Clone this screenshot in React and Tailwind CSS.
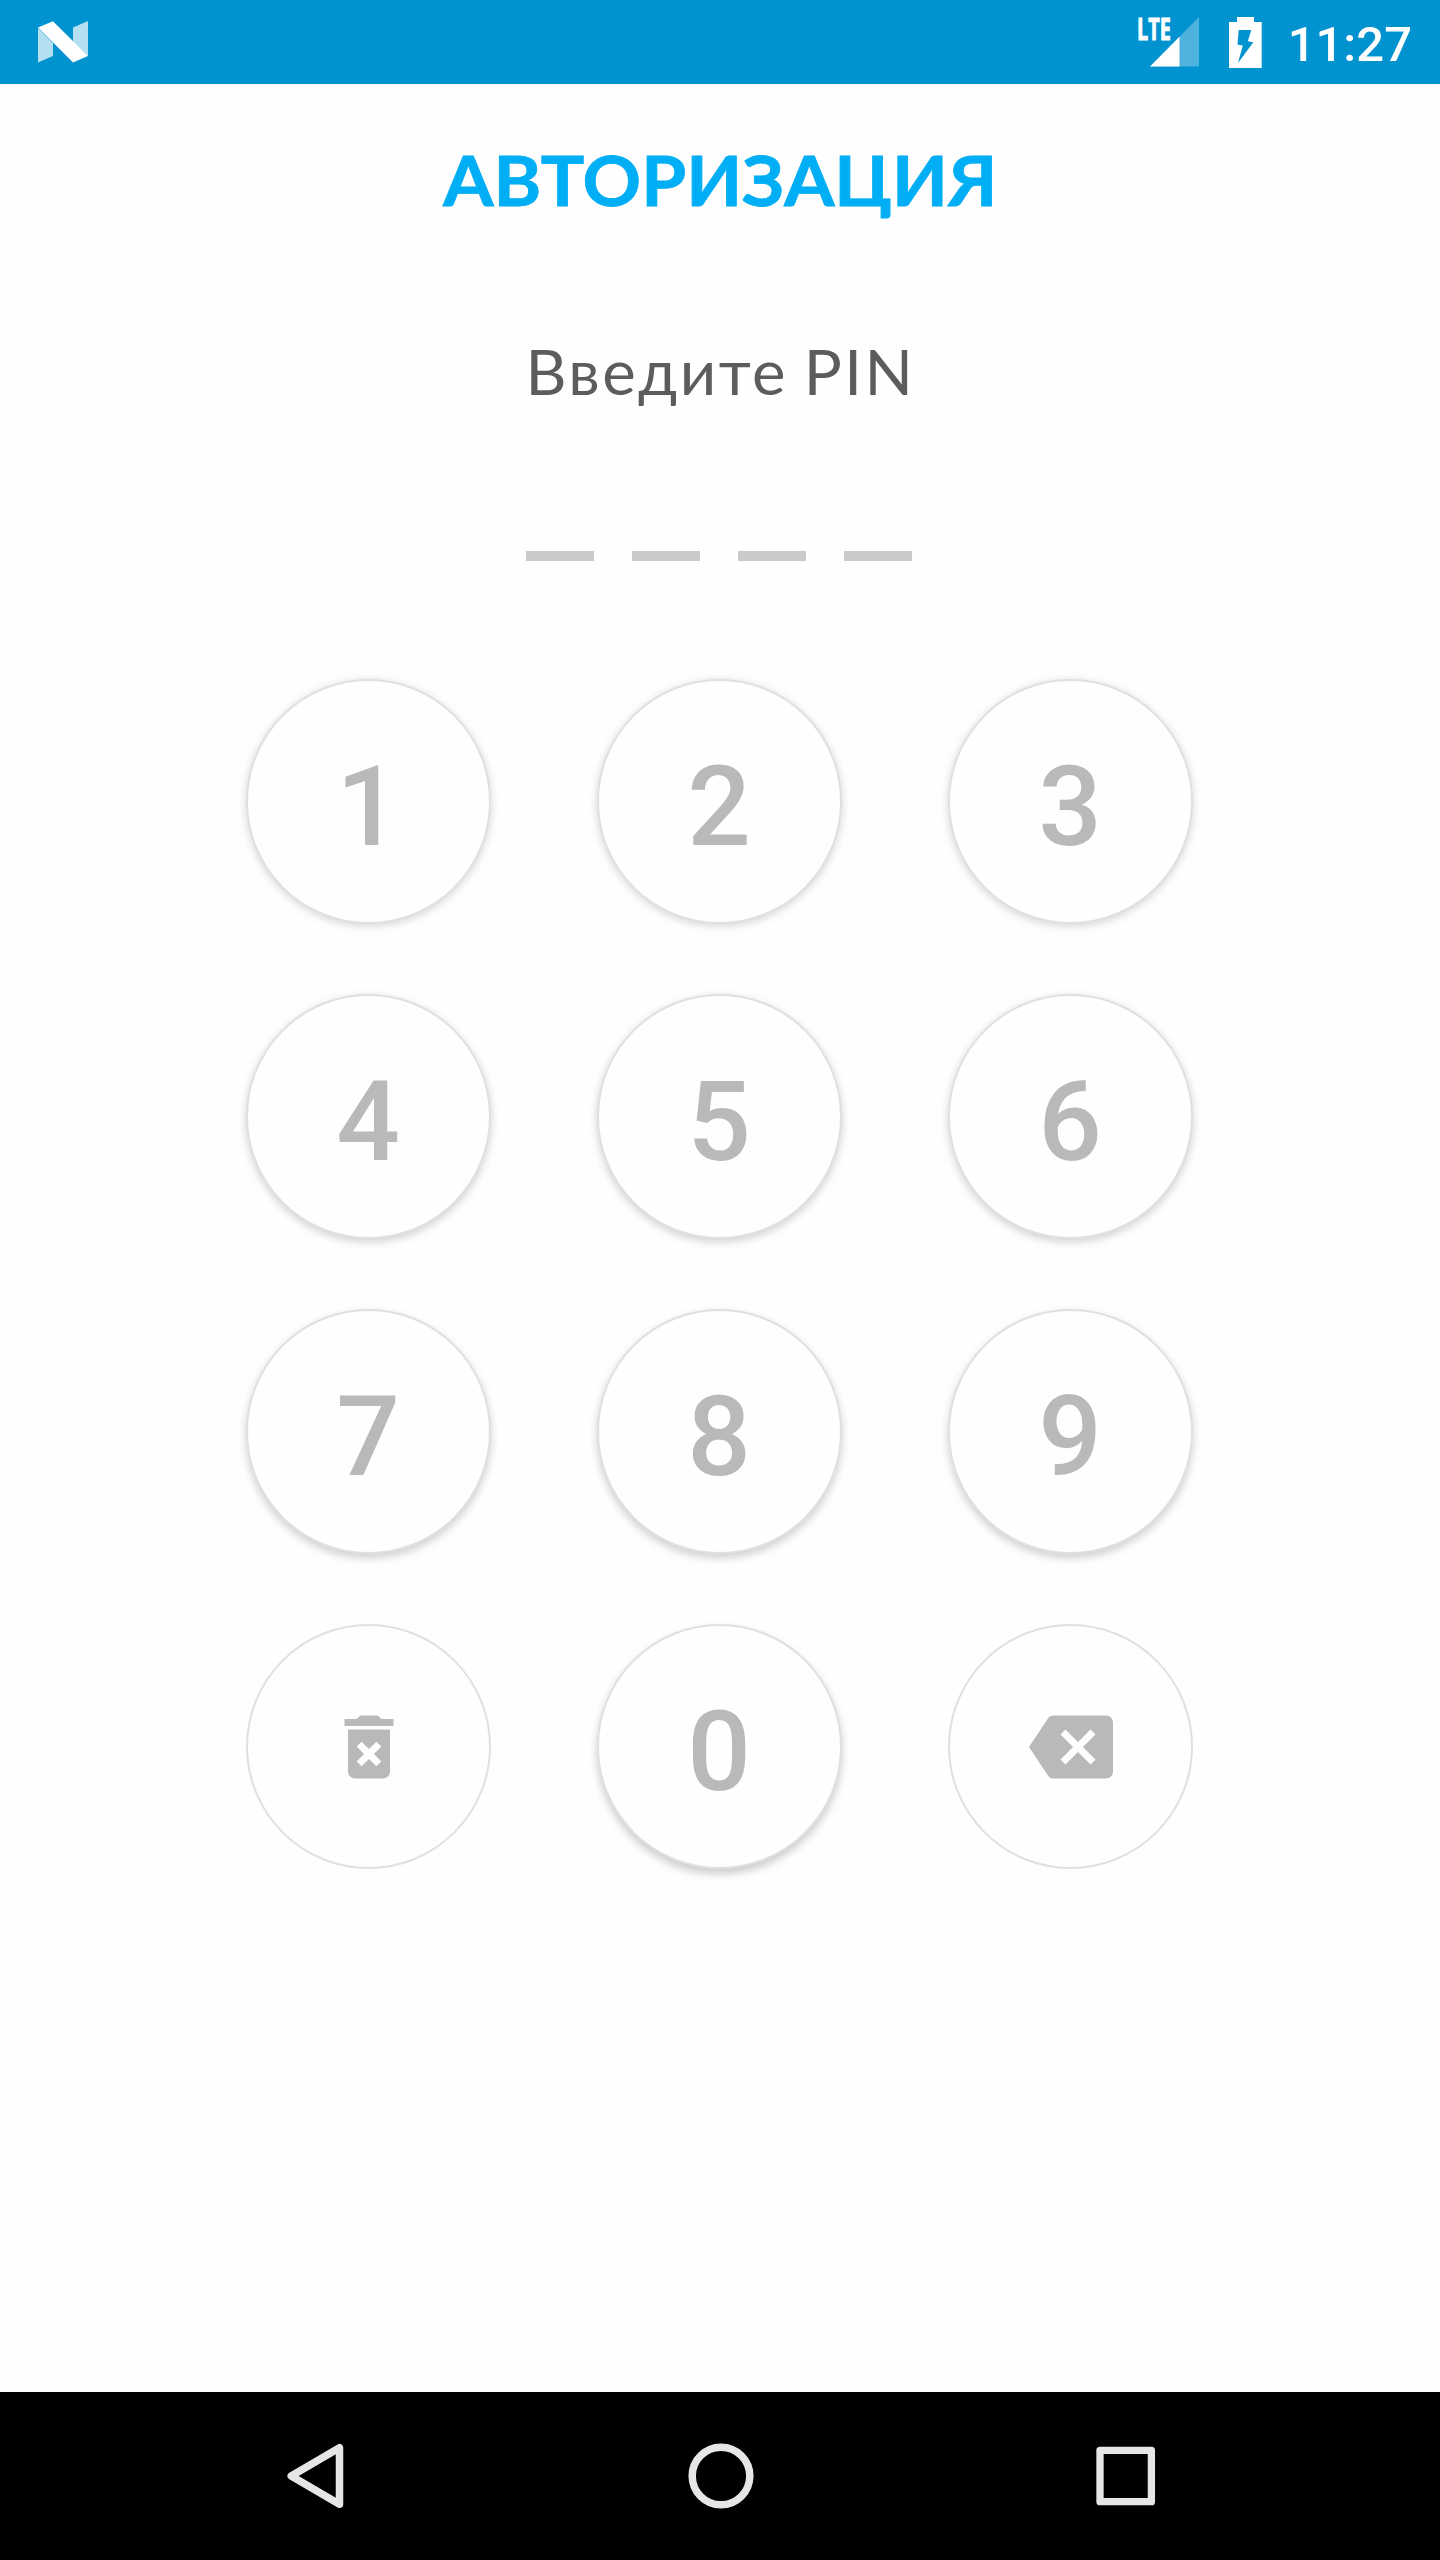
const rows = [
  { keys: ['1', '2', '3'], shadow: 'shadow-[0_2px_8px_rgba(0,0,0,0.17)]' },
  { keys: ['4', '5', '6'], shadow: 'shadow-[0_3px_8px_rgba(0,0,0,0.18)]' },
  { keys: ['7', '8', '9'], shadow: 'shadow-[0_4px_8px_rgba(0,0,0,0.19)]' },
  { keys: ['clear', '0', 'back'], shadow: 'shadow-[0_5px_9px_rgba(0,0,0,0.20)]' },
];

function TrashIcon() {
  return (
    <svg viewBox="0 0 24 24" className="size-[84px] fill-[#b9b9b9]">
      <path d="M6 19c0 1.1.9 2 2 2h8c1.1 0 2-.9 2-2V7H6v12zm2.46-7.12l1.41-1.41L12 12.59l2.12-2.12 1.41 1.41L13.41 14l2.12 2.12-1.41 1.41L12 15.41l-2.12 2.12-1.41-1.41L10.59 14l-2.13-2.12zM15.5 4l-.7-.7c-.2-.2-.45-.3-.7-.3H9.9c-.25 0-.5.1-.7.3l-.7.7H5v2h14V4z" />
    </svg>
  );
}

function BackspaceIcon() {
  return (
    <svg viewBox="0 0 24 24" className="size-[84px] fill-[#b9b9b9]">
      <path d="M22 3H7c-.69 0-1.23.35-1.59.88L0 12l5.41 8.11c.36.53.9.89 1.59.89h15c1.1 0 2-.9 2-2V5c0-1.1-.9-2-2-2zm-3 12.59L17.59 17 14 13.41 10.41 17 9 15.59 12.59 12 9 8.41 10.41 7 14 10.59 17.59 7 19 8.41 15.41 12 19 15.59z" />
    </svg>
  );
}

function Key({ value, shadow }) {
  const base =
    'flex size-[245px] items-center justify-center rounded-full border-2 border-[#e0e0e0] bg-[#fefefe]';
  if (value === 'clear') {
    return (
      <button aria-label="Очистить" className={base}>
        <TrashIcon />
      </button>
    );
  }
  if (value === 'back') {
    return (
      <button aria-label="Удалить" className={base}>
        <BackspaceIcon />
      </button>
    );
  }
  return (
    <button className={`${base} ${shadow}`}>
      <span className="pt-[10px] pr-px font-['Roboto',sans-serif] text-[112px] leading-none font-medium text-[#b9b9b9]">
        {value}
      </span>
    </button>
  );
}

function StatusBar() {
  return (
    <header className="flex h-[84px] shrink-0 items-center justify-between bg-[#0093d0] pr-[28px] pl-[38px]">
      <svg viewBox="0 0 50 42" className="h-[42px] w-[50px]">
        <path d="M0 7v34.500L15 35V22z" fill="#b3dff1" />
        <path d="M35 6.500L50 0v35L35 21z" fill="#b3dff1" />
        <path d="M0 6.500L15 .2 50 35 35 41.500z" fill="#fff" />
      </svg>
      <div className="flex h-full items-center">
        <div className="relative h-[50px] w-[61px]">
          <svg viewBox="0 0 61 50" className="h-[50px] w-[61px]">
            <path d="M12 49.500L61 0v49.500z" fill="#4db3de" />
            <path d="M12 49.500L41.500 19.700v29.800z" fill="#fff" />
          </svg>
          <span className="absolute top-[-3px] left-[-1px] origin-left scale-x-[0.66] font-['Open_Sans',sans-serif] text-[30px] leading-[30px] font-bold text-white [-webkit-text-stroke:1px_white]">
            LTE
          </span>
        </div>
        <svg viewBox="0 0 33 51" className="ml-[30px] h-[51px] w-[33px]">
          <path
            fill="#fff"
            fillRule="evenodd"
            d="M8 0h17v5h7.700v46H0V5h8zM9.700 13L8.500 27.800l5.300.8L9 46 24.300 25.200 18.800 24.300 22.300 13z"
          />
        </svg>
        <span className="ml-[26px] pt-1 font-['Roboto',sans-serif] text-[49px] leading-none font-medium text-white">
          11:27
        </span>
      </div>
    </header>
  );
}

function NavBar() {
  return (
    <nav className="flex h-[168px] shrink-0 items-center justify-between bg-black pr-[284px] pl-[286px] text-[#e6e6e6]">
      <svg viewBox="0 0 59 66" className="h-[66px] w-[59px]" fill="none" stroke="currentColor" strokeWidth="7.500" strokeLinejoin="round">
        <path d="M5.200 33L53.500 4.700v56.600z" />
      </svg>
      <svg viewBox="0 0 66 66" className="h-[66px] w-[66px]" fill="none" stroke="currentColor" strokeWidth="7.500">
        <circle cx="33" cy="33" r="28.800" />
      </svg>
      <svg viewBox="0 0 60 60" className="size-[60px]" fill="none" stroke="currentColor" strokeWidth="7.300" strokeLinejoin="round">
        <rect x="4" y="4.300" width="51.400" height="51.400" />
      </svg>
    </nav>
  );
}

export default function App() {
  return (
    <div className="flex h-[2560px] w-[1440px] flex-col overflow-hidden bg-[#fefefe]">
      <StatusBar />
      <main className="flex flex-1 flex-col items-center">
        <h1 className="mt-[46px] ml-[1px] h-[100px] scale-x-[1.052] font-['Lato',sans-serif] text-[69px] leading-[100px] font-bold whitespace-nowrap text-[#00aef5] [-webkit-text-stroke:0.8px_#00aef5]">
          АВТОРИЗАЦИЯ
        </h1>
        <p className="mt-[102px] h-[80px] scale-x-[1.04] font-['Lato',sans-serif] text-[61px] leading-[80px] tracking-[2.4px] whitespace-nowrap text-[#5c5c5c] [word-spacing:-3px]">
          Введите PIN
        </p>
        <div className="mt-[139px] mr-[2px] flex gap-[38px]">
          {[0, 1, 2, 3].map((i) => (
            <span key={i} className="h-[10px] w-[68px] bg-[#cacaca]" />
          ))}
        </div>
        <div className="mt-[118px] mr-[1px] flex flex-col gap-[70px]">
          {rows.map((row) => (
            <div key={row.keys[1]} className="flex gap-[106px]">
              {row.keys.map((k) => (
                <Key key={k} value={k} shadow={row.shadow} />
              ))}
            </div>
          ))}
        </div>
      </main>
      <NavBar />
    </div>
  );
}
